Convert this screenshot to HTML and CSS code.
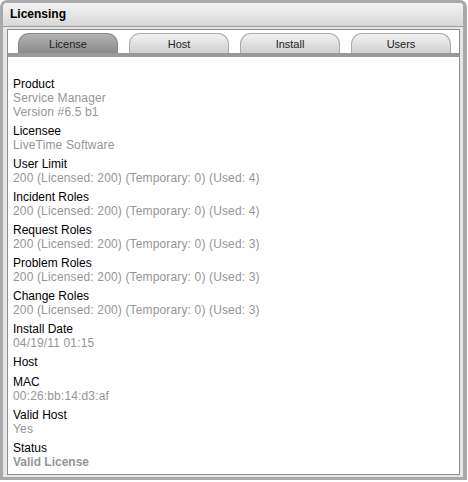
FILE: index.html
```html
<!DOCTYPE html>
<html>
<head>
<meta charset="utf-8">
<link rel="stylesheet" href="styles.css">
</head>
<body>
<div class="panel">
  <div class="header">Licensing</div>
  <div class="body">
    <div class="inner">
      <div class="tabs">
        <div class="tab active">License</div>
        <div class="tab">Host</div>
        <div class="tab">Install</div>
        <div class="tab">Users</div>
      </div>
      <div class="content">
        <div class="field"><div class="label">Product</div><div class="value">Service Manager</div><div class="value">Version #6.5 b1</div></div>
        <div class="field"><div class="label">Licensee</div><div class="value">LiveTime Software</div></div>
        <div class="field"><div class="label">User Limit</div><div class="value">200 (Licensed: 200) (Temporary: 0) (Used: 4)</div></div>
        <div class="field"><div class="label">Incident Roles</div><div class="value">200 (Licensed: 200) (Temporary: 0) (Used: 4)</div></div>
        <div class="field"><div class="label">Request Roles</div><div class="value">200 (Licensed: 200) (Temporary: 0) (Used: 3)</div></div>
        <div class="field"><div class="label">Problem Roles</div><div class="value">200 (Licensed: 200) (Temporary: 0) (Used: 3)</div></div>
        <div class="field"><div class="label">Change Roles</div><div class="value">200 (Licensed: 200) (Temporary: 0) (Used: 3)</div></div>
        <div class="field"><div class="label">Install Date</div><div class="value">04/19/11 01:15</div></div>
        <div class="field empty"><div class="label">Host</div></div>
        <div class="field"><div class="label">MAC</div><div class="value">00:26:bb:14:d3:af</div></div>
        <div class="field"><div class="label">Valid Host</div><div class="value">Yes</div></div>
        <div class="field"><div class="label">Status</div><div class="value strong">Valid License</div></div>
      </div>
    </div>
  </div>
</div>
</body>
</html>
```
FILE: styles.css
```css
html, body {
  margin: 0;
  padding: 0;
  background: #fff;
}
body {
  font-family: "Liberation Sans", Arial, sans-serif;
}
.panel {
  width: 467px;
  height: 480px;
  box-sizing: border-box;
  border: 3px solid #a9a9a9;
  border-right-width: 4px;
  border-radius: 7px 7px 0 0;
  background: #e6e6e6;
  display: flex;
  flex-direction: column;
}
.header {
  height: 23px;
  line-height: 23px;
  padding-left: 7px;
  font-size: 12px;
  font-weight: bold;
  color: #000;
  background: linear-gradient(#f3f3f3, #d8d8d8);
  border-bottom: 1px solid #9c9c9c;
  border-radius: 4px 4px 0 0;
}
.body {
  flex: 1;
  display: flex;
  padding: 2px 3px 3px 4px;
}
.inner {
  flex: 1;
  background: #fff;
  border: 1px solid #8e8e8e;
}
.tabs {
  display: flex;
  gap: 11px;
  padding: 3px 0 0 10px;
  border-bottom: 4px solid #999;
}
.tab {
  width: 100px;
  height: 20px;
  box-sizing: border-box;
  border: 1px solid #aaa;
  border-bottom: none;
  border-radius: 11px 11px 0 0;
  background: linear-gradient(#f2f2f2, #cfcfcf);
  font-size: 11px;
  line-height: 20px;
  text-align: center;
  color: #222;
}
.tab.active {
  background: linear-gradient(#b4b4b4, #8a8a8a);
  border-color: #888;
  color: #222;
}
.content {
  padding: 20px 5px 0 5px;
  font-size: 12px;
  line-height: 14px;
}
.field {
  margin-bottom: 5px;
}
.field.empty {
  margin-bottom: 6px;
}
.label {
  color: #000;
}
.value {
  color: #959595;
  letter-spacing: 0.15px;
}
.value.strong {
  font-weight: bold;
  letter-spacing: 0;
}
```
